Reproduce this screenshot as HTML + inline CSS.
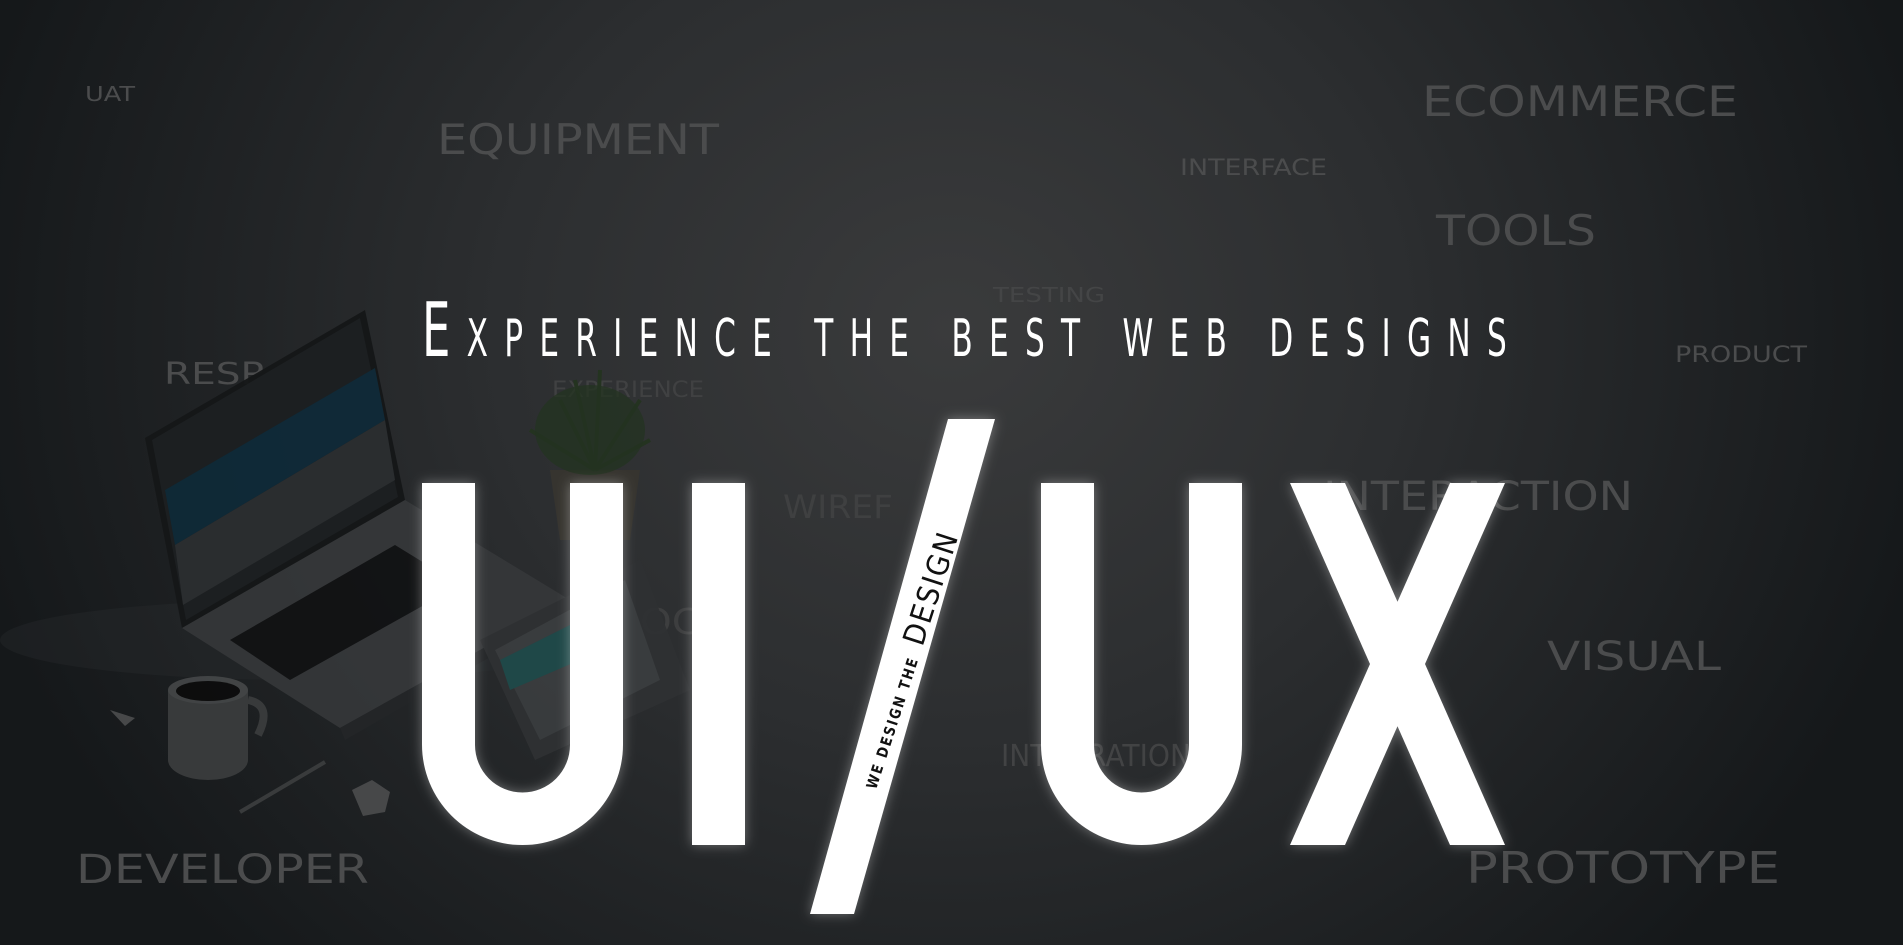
<!DOCTYPE html>
<html><head><meta charset="utf-8"><style>
html,body{margin:0;padding:0;width:1903px;height:945px;overflow:hidden;background:#222527}
svg{display:block}
</style></head><body>
<svg width="1903" height="945" viewBox="0 0 1903 945" xmlns="http://www.w3.org/2000/svg">
<defs>
<radialGradient id="bg" cx="950" cy="330" r="1000" gradientUnits="userSpaceOnUse" gradientTransform="translate(950 330) scale(1 0.9) translate(-950 -330)">
<stop offset="0" stop-color="#3a3b3c"/>
<stop offset="0.45" stop-color="#2c2e30"/>
<stop offset="1" stop-color="#15181a"/>
</radialGradient>
<filter id="glow" x="-20%" y="-20%" width="140%" height="140%">
<feGaussianBlur stdDeviation="6" result="b"/>
<feColorMatrix in="b" type="matrix" values="0 0 0 0 1 0 0 0 0 1 0 0 0 0 1 0 0 0 0.35 0"/>
<feMerge><feMergeNode/><feMergeNode in="SourceGraphic"/></feMerge>
</filter>
</defs>
<rect width="1903" height="945" fill="url(#bg)"/>

<g font-family="'DejaVu Sans','Liberation Sans',sans-serif" fill="#4b4c4d">
<text x="85" y="101" font-size="20" textLength="50" lengthAdjust="spacingAndGlyphs">UAT</text>
<text x="437" y="154" font-size="42" textLength="282" lengthAdjust="spacingAndGlyphs">EQUIPMENT</text>
<text x="1422" y="116" font-size="42" textLength="316" lengthAdjust="spacingAndGlyphs">ECOMMERCE</text>
<text x="1180" y="175" font-size="22" textLength="147" lengthAdjust="spacingAndGlyphs">INTERFACE</text>
<text x="1436" y="245" font-size="42" textLength="160" lengthAdjust="spacingAndGlyphs">TOOLS</text>
<text x="993" y="302" font-size="20" textLength="112" lengthAdjust="spacingAndGlyphs" fill="#444546">TESTING</text>
<text x="1675" y="362" font-size="22" textLength="132" lengthAdjust="spacingAndGlyphs">PRODUCT</text>
<text x="164" y="384" font-size="30" textLength="100" lengthAdjust="spacingAndGlyphs">RESP</text>
<text x="552" y="397" font-size="22" textLength="152" lengthAdjust="spacingAndGlyphs" fill="#404142">EXPERIENCE</text>
<text x="783" y="518" font-size="32" textLength="110" lengthAdjust="spacingAndGlyphs" fill="#3f4041">WIREF</text>
<text x="1323" y="510" font-size="40" textLength="310" lengthAdjust="spacingAndGlyphs">INTERACTION</text>
<text x="640" y="634" font-size="36" textLength="60" lengthAdjust="spacingAndGlyphs" fill="#3d3e3f">OC</text>
<text x="1547" y="670" font-size="40" textLength="174" lengthAdjust="spacingAndGlyphs">VISUAL</text>
<text x="1001" y="766" font-size="30" textLength="190" lengthAdjust="spacingAndGlyphs" fill="#424344">INTEGRATION</text>
<text x="76" y="883" font-size="40" textLength="293" lengthAdjust="spacingAndGlyphs">DEVELOPER</text>
<text x="1466" y="883" font-size="44" textLength="314" lengthAdjust="spacingAndGlyphs">PROTOTYPE</text>
</g>

<!-- laptop and desk items (dim) -->
<g opacity="0.95">
<ellipse cx="300" cy="640" rx="300" ry="40" fill="#2c2f31" opacity="0.35"/>
<polygon points="145,438 365,310 405,500 182,628" fill="#151718"/>
<polygon points="152,440 360,318 398,497 186,620" fill="#1c1f21"/>
<polygon points="165,490 375,368 385,420 175,545" fill="#0f2a38"/>
<polygon points="175,545 385,420 395,480 183,605" fill="#2b2e30"/>
<polygon points="182,628 405,500 570,600 340,728" fill="#353739"/>
<polygon points="230,640 395,545 460,585 290,680" fill="#121314"/>
<polygon points="340,728 570,600 572,610 345,740" fill="#242628"/>
<polygon points="480,640 640,560 690,690 535,760" fill="#2f3133"/>
<polygon points="495,650 625,580 660,680 540,740" fill="#3a3d3f"/>
<polygon points="500,660 570,625 580,660 510,690" fill="#1f4a4a"/>
<path d="M168,690 h80 v70 a40,20 0 0 1 -80,0z" fill="#3a3c3d"/>
<ellipse cx="208" cy="690" rx="40" ry="14" fill="#444647"/>
<ellipse cx="208" cy="691" rx="32" ry="10" fill="#0d0d0d"/>
<path d="M248,700 q25,5 10,35" stroke="#3a3c3d" stroke-width="8" fill="none"/>
<line x1="240" y1="812" x2="325" y2="762" stroke="#3b3d3e" stroke-width="4"/>
<path d="M352,790 l20,-10 l18,12 l-5,20 l-22,4 z" fill="#4a4b4c"/>
<path d="M110,710 l25,8 l-10,8 z" fill="#4a4b4c"/>
<path d="M550,470 h90 l-10,70 h-70 z" fill="#37352f"/>
<g stroke="#243420" stroke-width="4">
<line x1="595" y1="470" x2="560" y2="400"/><line x1="595" y1="470" x2="600" y2="370"/>
<line x1="595" y1="470" x2="640" y2="400"/><line x1="595" y1="470" x2="530" y2="430"/>
<line x1="595" y1="470" x2="650" y2="440"/><line x1="595" y1="470" x2="575" y2="380"/>
</g>
<ellipse cx="590" cy="430" rx="55" ry="45" fill="#233320" opacity="0.8"/>
</g>

<!-- heading -->
<g transform="translate(422,356) scale(0.6,1)" fill="#ffffff">
<text x="0" y="0" font-family="'DejaVu Sans','Liberation Sans',sans-serif" textLength="1808" lengthAdjust="spacing"><tspan font-size="75">E</tspan><tspan font-size="52">XPERIENCE THE BEST WEB DESIGNS</tspan></text>
</g>

<!-- UI/UX -->
<g fill="#ffffff" filter="url(#glow)">
<path d="M422,483 H475 V745 A47.5,47.5 0 0 0 570,745 V483 H623 V744.5 A100.5,100.5 0 0 1 422,744.5 Z"/>
<rect x="692" y="483" width="53" height="362"/>
<polygon points="948,419 995,419 854,914 810,914"/>
<path d="M1041,483 H1094 V745 A47.5,47.5 0 0 0 1189,745 V483 H1242 V744.5 A100.5,100.5 0 0 1 1041,744.5 Z"/>
<polygon points="1290,483 1345,483 1505,845 1450,845"/>
<polygon points="1450,483 1505,483 1345,845 1290,845"/>
</g>

<g transform="translate(876,790) rotate(-72)">
<text x="0" y="0" font-family="'DejaVu Sans Condensed','DejaVu Sans',sans-serif" font-weight="bold" font-size="15" fill="#111" textLength="138" lengthAdjust="spacingAndGlyphs" letter-spacing="2">WE DESIGN THE</text>
<text x="150" y="0" font-family="'DejaVu Sans','Liberation Sans',sans-serif" font-size="30" fill="#111" textLength="118" lengthAdjust="spacingAndGlyphs" letter-spacing="2">DESIGN</text>
</g>
</svg>
</body></html>
